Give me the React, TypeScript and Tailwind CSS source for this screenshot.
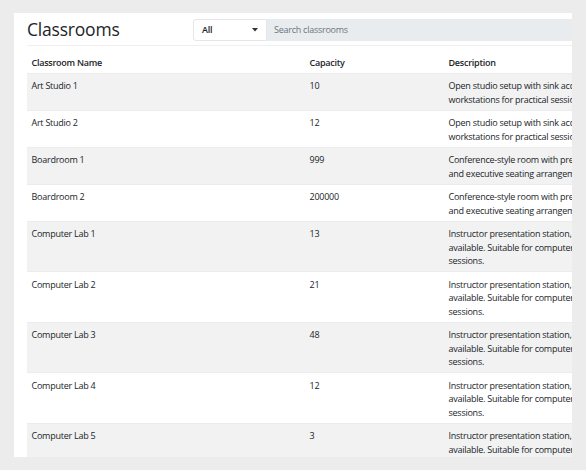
import React from 'react'

type Room = {
  name: string
  capacity: string
  lines: string[]
}

const artLines = ['Open studio setup with sink access and easel', 'workstations for practical sessions.']
const boardLines = ['Conference-style room with presentation screen', 'and executive seating arrangement.']
const labLines = [
  'Instructor presentation station, projector and printer',
  'available. Suitable for computer-based classes and exam',
  'sessions.',
]

const rooms: Room[] = [
  { name: 'Art Studio 1', capacity: '10', lines: artLines },
  { name: 'Art Studio 2', capacity: '12', lines: artLines },
  { name: 'Boardroom 1', capacity: '999', lines: boardLines },
  { name: 'Boardroom 2', capacity: '200000', lines: boardLines },
  { name: 'Computer Lab 1', capacity: '13', lines: labLines },
  { name: 'Computer Lab 2', capacity: '21', lines: labLines },
  { name: 'Computer Lab 3', capacity: '48', lines: labLines },
  { name: 'Computer Lab 4', capacity: '12', lines: labLines },
  { name: 'Computer Lab 5', capacity: '3', lines: labLines },
]

export default function App() {
  return (
    <div
      className="h-[470px] w-[586px] overflow-hidden bg-[#ececec] pt-[13px] pl-[14px]"
      style={{ fontFamily: '"Open Sans", "Noto Sans", sans-serif' }}
    >
      <div className="h-[444px] w-[558px] overflow-hidden bg-white pl-[13px]">
        <div className="w-[720px]">
          {/* header */}
          <div className="flex h-[33px] items-center border-b border-[#f0f0f0] pt-[2px]">
            <h1 className="w-[166px] text-[17.5px] font-medium leading-none tracking-[-0.2px] text-[#212529]">
              Classrooms
            </h1>
            <div className="flex h-[21.5px] flex-1 items-stretch">
              <div className="flex w-[74px] items-center justify-between rounded-l-[3px] border border-[#e3e6ea] bg-white pl-[8px] pr-[8px]">
                <span className="text-[9px] font-semibold tracking-[-0.25px] text-[#212529]">All</span>
                <svg width="6" height="4" viewBox="0 0 6 4">
                  <path d="M0 0h6L3 3.5z" fill="#333" />
                </svg>
              </div>
              <div className="flex flex-1 items-center bg-[#e9ecef] pl-[7px] text-[9px] tracking-[-0.25px] text-[#6c757d]">
                Search classrooms
              </div>
            </div>
          </div>

          {/* table */}
          <table className="w-[720px] table-fixed border-collapse text-[9px] leading-[13.5px] tracking-[-0.25px] text-[#212529]">
            <colgroup>
              <col className="w-[278px]" />
              <col className="w-[139px]" />
              <col />
            </colgroup>
            <thead>
              <tr className="text-left">
                <th className="px-[4.5px] pt-[10px] pb-[3px] font-semibold">Classroom Name</th>
                <th className="px-[4.5px] pt-[10px] pb-[3px] font-semibold">Capacity</th>
                <th className="px-[4.5px] pt-[10px] pb-[3px] font-semibold">Description</th>
              </tr>
            </thead>
            <tbody>
              {rooms.map((room, i) => (
                <tr
                  key={room.name}
                  className={`border-t border-[#ececec] align-top ${i % 2 === 0 ? 'bg-[#f2f2f2]' : 'bg-white'}`}
                >
                  <td className="px-[4.5px] pt-[5.5px] pb-[3.5px]">{room.name}</td>
                  <td className="px-[4.5px] pt-[5.5px] pb-[3.5px]">{room.capacity}</td>
                  <td className="px-[4.5px] pt-[5.5px] pb-[3.5px]">
                    {room.lines.map(line => (
                      <span key={line} className="block whitespace-nowrap">
                        {line}
                      </span>
                    ))}
                  </td>
                </tr>
              ))}
            </tbody>
          </table>
        </div>
      </div>
    </div>
  )
}
